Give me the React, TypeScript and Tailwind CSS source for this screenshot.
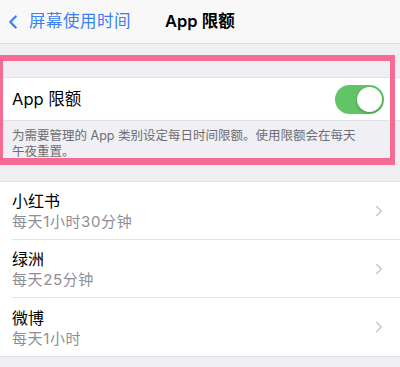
import { ChevronLeft, ChevronRight } from "lucide-react";

const FONT = { fontFamily: 'Inter, "Noto Sans CJK SC", "Noto Sans", sans-serif' };

const APPS = [
  { name: "小红书", limit: "每天1小时30分钟" },
  { name: "绿洲", limit: "每天25分钟" },
  { name: "微博", limit: "每天1小时" },
];

function Toggle() {
  return (
    <div className="flex h-[29px] w-[49px] items-center justify-end rounded-full bg-[#62c466] p-[2px]">
      <div className="h-[25px] w-[25px] rounded-full bg-white shadow-[0_1px_3px_rgba(0,0,0,0.3)]" />
    </div>
  );
}

export default function App() {
  return (
    <div className="relative h-[367px] w-[400px] overflow-hidden bg-[#efeff4]" style={FONT}>
      <header className="relative flex h-[44px] items-center border-b border-[#dcdce0] bg-[#f8f8f8]">
        <div className="flex items-center pl-[2px] text-[16.5px] text-[#3a80f5]">
          <ChevronLeft className="h-[22px] w-[22px]" strokeWidth={2.4} />
          <span className="ml-[5px] tracking-[0.5px]">屏幕使用时间</span>
        </div>
        <h1 className="absolute left-[165px] text-[16.5px] font-semibold text-black">App 限额</h1>
      </header>

      <div className="h-[33px]" />

      <section>
        <div className="flex h-[44px] items-center justify-between border-y border-[#e2e2e6] bg-white pl-[12px] pr-[16px]">
          <span className="text-[16.5px] text-black">App 限额</span>
          <Toggle />
        </div>
        <p className="px-[12px] pt-[7px] text-[12.5px] leading-[16px] text-[#6d6d72]">
          为需要管理的 App 类别设定每日时间限额。使用限额会在每天
          <br />
          午夜重置。
        </p>
      </section>

      <div className="h-[21px]" />

      <ul className="border-y border-[#e2e2e6] bg-white">
        {APPS.map((a, i) => (
          <li key={a.name} className="flex items-center pl-[12px]">
            <div
              className={`flex h-[58px] flex-1 items-center justify-between pr-[14px] ${
                i < APPS.length - 1 ? "border-b border-[#e4e4e8]" : ""
              }`}
            >
              <div className="flex flex-col">
                <span className="text-[16px] leading-[22px] text-black">{a.name}</span>
                <span className="text-[15px] leading-[19px] tracking-[0.6px] text-[#8e8e93]">{a.limit}</span>
              </div>
              <ChevronRight className="mr-[-2px] h-[18px] w-[18px] text-[#c4c4c8]" strokeWidth={1.8} />
            </div>
          </li>
        ))}
      </ul>

      {/* annotation frame */}
      <div className="pointer-events-none absolute left-0 top-[55px] h-[110px] w-[395px] border-[#f76b93] border-t-[6px] border-l-[3px] border-r-[5px] border-b-[7px]" />
    </div>
  );
}
